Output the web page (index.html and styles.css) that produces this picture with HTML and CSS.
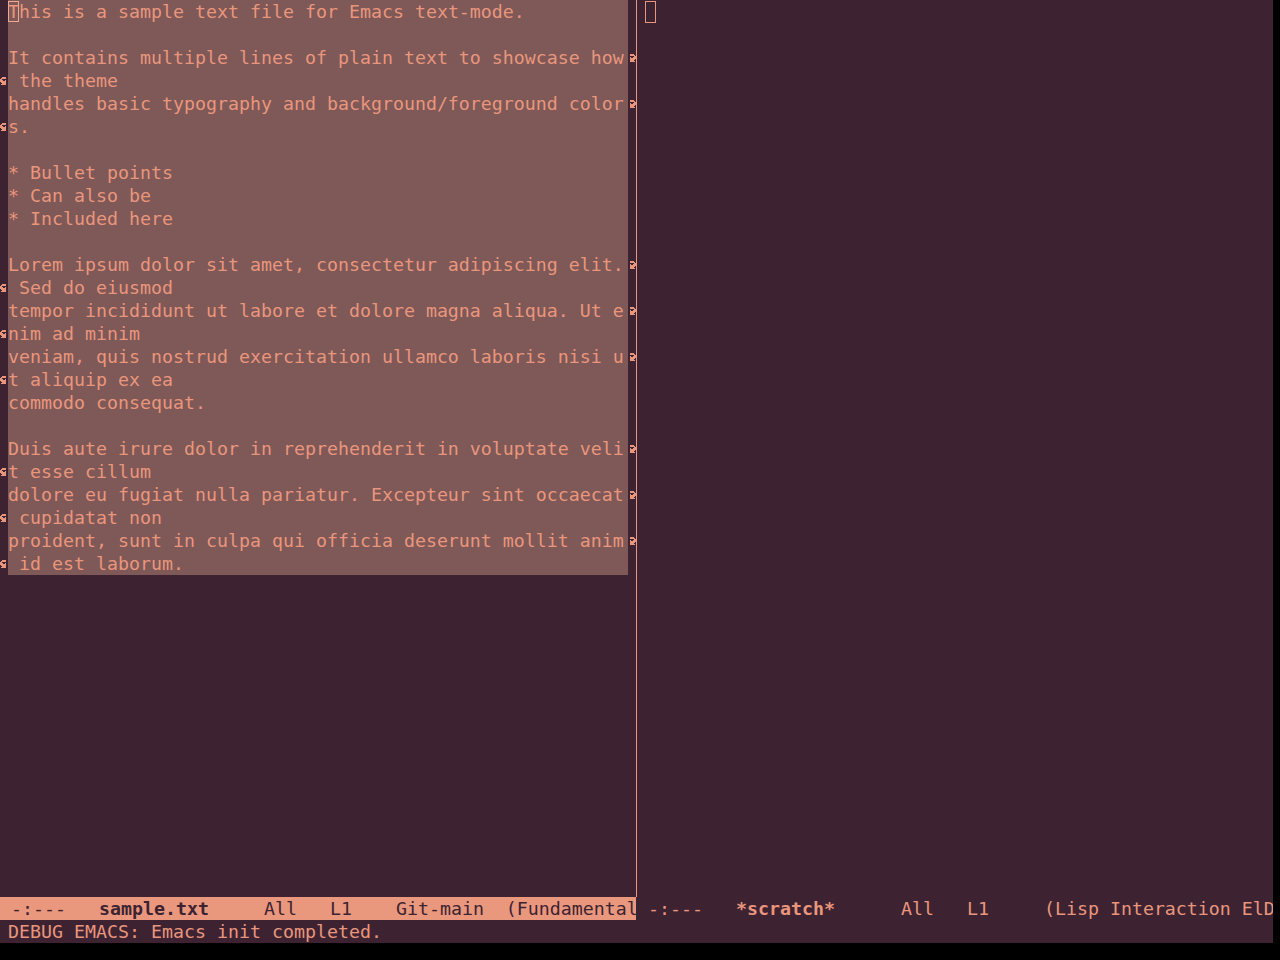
FILE: index.html
```html
<!DOCTYPE html>
<html>
<head>
<meta charset="utf-8">
<title>Emacs</title>
<link rel="stylesheet" href="styles.css">
</head>
<body>
<svg width="0" height="0" class="defs">
  <defs>
    <path id="rarrow" d="M2 0h4v1h-4z M2 1h5v1h-5z M6 2h2v1h-2z M2 3h1v1h-1z M5 3h3v1h-3z M2 4h6v1h-6z M2 5h5v1h-5z M2 6h4v1h-4z M2 7h5v1h-5z"/>
    <path id="larrow" d="M2 0h4v1h-4z M1 1h5v1h-5z M0 2h2v1h-2z M0 3h3v1h-3z M5 3h1v1h-1z M0 4h6v1h-6z M1 5h5v1h-5z M2 6h4v1h-4z M1 7h5v1h-5z"/>
  </defs>
</svg>
<div class="frame">
  <div class="windows">
    <div class="win">
      <div class="body">
        <div class="row"><span class="fl"></span><span class="tx reg"><span class="cur">T</span>his is a sample text file for Emacs text-mode.</span><span class="fr"></span></div>
        <div class="row"><span class="fl"></span><span class="tx reg"></span><span class="fr"></span></div>
        <div class="row"><span class="fl"></span><span class="tx reg">It contains multiple lines of plain text to showcase how</span><span class="fr"><svg class="bm" viewBox="0 0 8 8"><use href="#rarrow"/></svg></span></div>
        <div class="row"><span class="fl"><svg class="bm" viewBox="0 0 8 8"><use href="#larrow"/></svg></span><span class="tx reg"> the theme</span><span class="fr"></span></div>
        <div class="row"><span class="fl"></span><span class="tx reg">handles basic typography and background/foreground color</span><span class="fr"><svg class="bm" viewBox="0 0 8 8"><use href="#rarrow"/></svg></span></div>
        <div class="row"><span class="fl"><svg class="bm" viewBox="0 0 8 8"><use href="#larrow"/></svg></span><span class="tx reg">s.</span><span class="fr"></span></div>
        <div class="row"><span class="fl"></span><span class="tx reg"></span><span class="fr"></span></div>
        <div class="row"><span class="fl"></span><span class="tx reg">* Bullet points</span><span class="fr"></span></div>
        <div class="row"><span class="fl"></span><span class="tx reg">* Can also be</span><span class="fr"></span></div>
        <div class="row"><span class="fl"></span><span class="tx reg">* Included here</span><span class="fr"></span></div>
        <div class="row"><span class="fl"></span><span class="tx reg"></span><span class="fr"></span></div>
        <div class="row"><span class="fl"></span><span class="tx reg">Lorem ipsum dolor sit amet, consectetur adipiscing elit.</span><span class="fr"><svg class="bm" viewBox="0 0 8 8"><use href="#rarrow"/></svg></span></div>
        <div class="row"><span class="fl"><svg class="bm" viewBox="0 0 8 8"><use href="#larrow"/></svg></span><span class="tx reg"> Sed do eiusmod</span><span class="fr"></span></div>
        <div class="row"><span class="fl"></span><span class="tx reg">tempor incididunt ut labore et dolore magna aliqua. Ut e</span><span class="fr"><svg class="bm" viewBox="0 0 8 8"><use href="#rarrow"/></svg></span></div>
        <div class="row"><span class="fl"><svg class="bm" viewBox="0 0 8 8"><use href="#larrow"/></svg></span><span class="tx reg">nim ad minim</span><span class="fr"></span></div>
        <div class="row"><span class="fl"></span><span class="tx reg">veniam, quis nostrud exercitation ullamco laboris nisi u</span><span class="fr"><svg class="bm" viewBox="0 0 8 8"><use href="#rarrow"/></svg></span></div>
        <div class="row"><span class="fl"><svg class="bm" viewBox="0 0 8 8"><use href="#larrow"/></svg></span><span class="tx reg">t aliquip ex ea</span><span class="fr"></span></div>
        <div class="row"><span class="fl"></span><span class="tx reg">commodo consequat.</span><span class="fr"></span></div>
        <div class="row"><span class="fl"></span><span class="tx reg"></span><span class="fr"></span></div>
        <div class="row"><span class="fl"></span><span class="tx reg">Duis aute irure dolor in reprehenderit in voluptate veli</span><span class="fr"><svg class="bm" viewBox="0 0 8 8"><use href="#rarrow"/></svg></span></div>
        <div class="row"><span class="fl"><svg class="bm" viewBox="0 0 8 8"><use href="#larrow"/></svg></span><span class="tx reg">t esse cillum</span><span class="fr"></span></div>
        <div class="row"><span class="fl"></span><span class="tx reg">dolore eu fugiat nulla pariatur. Excepteur sint occaecat</span><span class="fr"><svg class="bm" viewBox="0 0 8 8"><use href="#rarrow"/></svg></span></div>
        <div class="row"><span class="fl"><svg class="bm" viewBox="0 0 8 8"><use href="#larrow"/></svg></span><span class="tx reg"> cupidatat non</span><span class="fr"></span></div>
        <div class="row"><span class="fl"></span><span class="tx reg">proident, sunt in culpa qui officia deserunt mollit anim</span><span class="fr"><svg class="bm" viewBox="0 0 8 8"><use href="#rarrow"/></svg></span></div>
        <div class="row"><span class="fl"><svg class="bm" viewBox="0 0 8 8"><use href="#larrow"/></svg></span><span class="tx reg"> id est laborum.</span><span class="fr"></span></div>
      </div>
      <div class="modeline active"> -:---   <b>sample.txt</b>     All   L1    Git-main  (Fundamental</div>
    </div>
    <div class="divider"></div>
    <div class="win">
      <div class="body">
        <div class="row"><span class="fl"></span><span class="tx"><span class="cur2"></span></span><span class="fr"></span></div>
      </div>
      <div class="modeline inactive"> -:---   <b>*scratch*</b>      All   L1     (Lisp Interaction ElD</div>
    </div>
  </div>
  <div class="echo"><span class="fl"></span><span class="echotext">DEBUG EMACS: Emacs init completed.</span></div>
</div>
</body>
</html>
```
FILE: styles.css
```css
html, body {
  margin: 0;
  padding: 0;
  background: #000000;
  width: 1280px;
  height: 960px;
  overflow: hidden;
}

.defs {
  position: absolute;
  width: 0;
  height: 0;
}

.frame {
  width: 1273px;
  height: 943px;
  background: #3d2332;
  color: #e9967c;
  font-family: "DejaVu Sans Mono", "Liberation Mono", monospace;
  font-size: 18.27px;
  line-height: 23px;
  display: flex;
  flex-direction: column;
}

.windows {
  height: 920px;
  display: grid;
  grid-template-columns: 636px 1px 636px;
}

.win {
  display: flex;
  flex-direction: column;
  min-width: 0;
  overflow: hidden;
}

.body {
  flex: 1;
  display: flex;
  flex-direction: column;
}

.row {
  display: grid;
  grid-template-columns: 8px 620px 8px;
  height: 23px;
}

.fl, .fr {
  display: flex;
  align-items: center;
  justify-content: center;
  height: 23px;
}

.bm {
  width: 8px;
  height: 8px;
  fill: #e9967c;
  shape-rendering: crispEdges;
}

.tx {
  white-space: pre;
  overflow: hidden;
  height: 23px;
}

.reg {
  background: #7f5858;
}

.cur {
  box-shadow: inset 0 0 0 1px #f0a890;
}

.cur2 {
  display: inline-block;
  width: 11px;
  height: 22px;
  margin-top: 1px;
  box-shadow: inset 0 0 0 1px #e9967c;
  vertical-align: top;
}

.divider {
  height: 897px;
  background: #e9967c;
}

.modeline {
  height: 23px;
  white-space: pre;
  overflow: hidden;
}

.modeline.active {
  background: #e9977d;
  color: #3d2332;
}

.modeline.inactive {
  background: #3d2332;
  color: #e9967c;
}

.modeline b {
  font-weight: bold;
}

.echo {
  height: 23px;
  display: flex;
}

.echo .fl {
  width: 8px;
}

.echotext {
  white-space: pre;
}
```
